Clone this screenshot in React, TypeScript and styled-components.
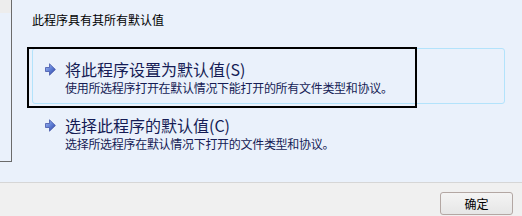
import styled, { createGlobalStyle } from 'styled-components'

const GlobalStyle = createGlobalStyle`
  html, body {
    margin: 0;
    padding: 0;
    width: 522px;
    height: 216px;
    overflow: hidden;
    background: #f0f0f0;
  }
  body {
    font-family: "Noto Sans CJK SC", "Noto Sans", sans-serif;
  }
`

type LinkItem = {
  title: string
  desc: string
  hovered?: boolean
  focused?: boolean
}

const items: LinkItem[] = [
  {
    title: '将此程序设置为默认值(S)',
    desc: '使用所选程序打开在默认情况下能打开的所有文件类型和协议。',
    hovered: true,
    focused: true,
  },
  {
    title: '选择此程序的默认值(C)',
    desc: '选择所选程序在默认情况下打开的文件类型和协议。',
  },
]

const ArrowIcon = () => (
  <svg width="11" height="13" viewBox="0 0 11 13">
    <defs>
      <linearGradient id="arrowFill" x1="0" y1="0" x2="1" y2="1">
        <stop offset="0" stopColor="#a9bdf2" />
        <stop offset="0.5" stopColor="#5f7fd6" />
        <stop offset="1" stopColor="#2e3f9c" />
      </linearGradient>
    </defs>
    <path
      d="M0.5 4.5 H4.5 V0.8 L10.4 6.5 L4.5 12.2 V8.5 H0.5 Z"
      fill="url(#arrowFill)"
      stroke="#4557a8"
      strokeWidth="0.8"
      strokeLinejoin="round"
    />
  </svg>
)

const App = () => {
  return (
    <>
      <GlobalStyle />
      <Window>
        <Main>
          <LeftStrip>
            <StripTop />
          </LeftStrip>
          <Content>
            <Header>此程序具有其所有默认值</Header>
            <LinkList>
              {items.map((item) => (
                <CommandLink key={item.title} hovered={!!item.hovered}>
                  {item.focused && <FocusRing />}
                  <IconCell>
                    <ArrowIcon />
                  </IconCell>
                  <LinkText>
                    <LinkTitle>{item.title}</LinkTitle>
                    <LinkDesc>{item.desc}</LinkDesc>
                  </LinkText>
                </CommandLink>
              ))}
            </LinkList>
          </Content>
        </Main>
        <Footer>
          <Button>确定</Button>
        </Footer>
      </Window>
    </>
  )
}

const Window = styled.div`
  display: flex;
  flex-direction: column;
  width: 522px;
  height: 216px;
`

const Main = styled.div`
  display: flex;
  flex-direction: row;
  align-items: flex-start;
  height: 182px;
  background-color: #eaf1fb;
  border-bottom: 1px solid #d6d6d6;
`

const LeftStrip = styled.div`
  width: 11px;
  height: 161px;
  border-right: 1px solid #6b6b6b;
  border-bottom: 1px solid #6b6b6b;
`

const StripTop = styled.div`
  height: 13px;
  background-color: #ededed;
`

const Content = styled.div`
  display: flex;
  flex-direction: column;
  flex: 1;
  padding: 11px 0 0 20px;
`

const Header = styled.div`
  font-size: 12px;
  line-height: 18px;
  color: #000;
`

const LinkList = styled.div`
  display: flex;
  flex-direction: column;
  margin-top: 19px;
`

const CommandLink = styled.div<{ hovered: boolean }>`
  position: relative;
  display: flex;
  flex-direction: row;
  align-items: flex-start;
  width: 473px;
  height: 56px;
  box-sizing: border-box;
  padding: 9px 0 0 12px;
  border: 1px solid ${({ hovered }) => (hovered ? '#b3e3fb' : 'transparent')};
  border-radius: 3px;
`

const FocusRing = styled.div`
  position: absolute;
  left: -6px;
  top: -2px;
  width: 390px;
  height: 61px;
  box-sizing: border-box;
  border: 2px solid #000;
  pointer-events: none;
`

const IconCell = styled.div`
  display: flex;
  width: 20px;
  padding-top: 5px;
`

const LinkText = styled.div`
  display: flex;
  flex-direction: column;
  color: #151c55;
`

const LinkTitle = styled.div`
  font-size: 16px;
  line-height: 23px;
`

const LinkDesc = styled.div`
  font-size: 12px;
  line-height: 17px;
  margin-top: -2px;
  letter-spacing: -0.3px;
`

const Footer = styled.div`
  display: flex;
  flex: 1;
  justify-content: flex-end;
  align-items: flex-start;
  padding: 9px 9px 0 0;
  background-color: #f0f0f0;
`

const Button = styled.button`
  width: 73px;
  height: 23px;
  padding: 0;
  border: 1px solid #b3a7a3;
  border-radius: 3px;
  background: linear-gradient(#f4f4f4, #e6e6e6);
  font-family: "Noto Sans CJK SC", sans-serif;
  font-size: 12px;
  color: #000;
`

export default App
